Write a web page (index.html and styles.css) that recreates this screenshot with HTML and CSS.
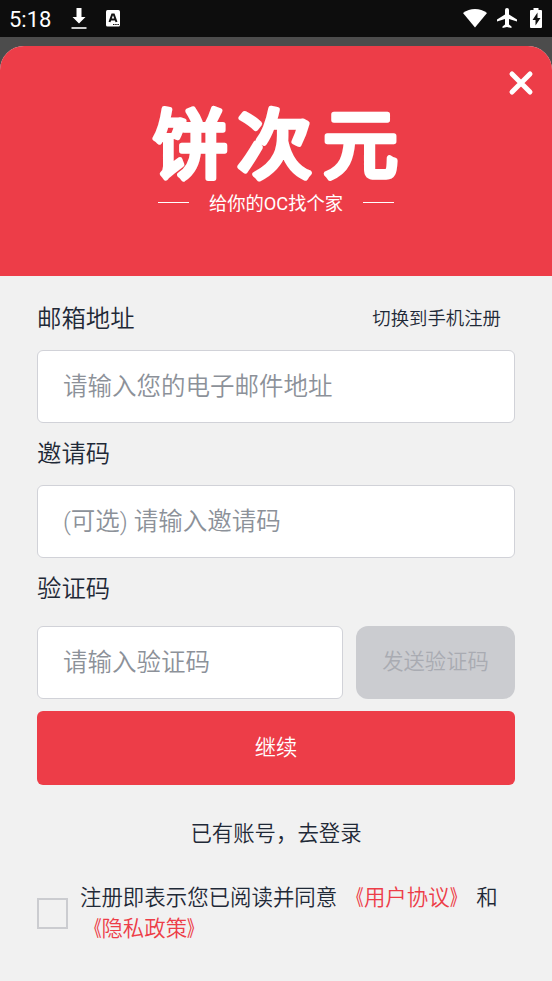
FILE: index.html
```html
<!DOCTYPE html>
<html lang="zh-CN">
<head>
<meta charset="utf-8">
<title>饼次元</title>
<link rel="stylesheet" href="styles.css">
</head>
<body>
<div class="status">
  <span class="time">5:18</span>
  <svg class="ic-download" width="16" height="22" viewBox="0 0 16 22"><path fill="#fff" d="M5.500 0h5v9h4L8 15.500 1.500 9h4z"/><path fill="#ccc" d="M.5 19h15v2H.5z"/></svg>
  <svg class="ic-app" width="14" height="17" viewBox="0 0 14 17"><rect width="14" height="16.500" rx="1.500" fill="#fff"/><path d="M3.500 12 6.200 4.500h1.600l2.700 7.500M4.700 9.500h4.600" fill="none" stroke="#111" stroke-width="2"/><path d="M7 14.500h6" stroke="#111" stroke-dasharray="1.500 .7"/></svg>
  <span class="grow"></span>
  <svg class="ic-wifi" width="24" height="19" viewBox="0 0 24 19"><path fill="#fff" d="M0 4C7-1.200 17-1.200 24 4L12 18.500z"/></svg>
  <svg class="ic-plane" width="20" height="20" viewBox="0 0 20 20"><path fill="#fff" d="M20 13.500v-2L12 6.500V2a2 2 0 0 0-4 0v4.500L0 11.500v2l8-2.500v5.500L5.500 18.500V20l4.500-1 4.500 1v-1.500L12 16.500V11z"/></svg>
  <svg class="ic-battery" width="12" height="20" viewBox="0 0 12 20"><path fill="#fff" d="M3.500 0h5v2H11q1 0 1 1v16q0 1-1 1H1q-1 0-1-1V3q0-1 1-1h2.500z"/><path fill="#111" d="M7.500 4.500 2.500 12H5.500v5.500l5-7.500H7.500z"/></svg>
</div>
<main class="sheet">
  <header class="hero">
    <svg class="close" width="26" height="26" viewBox="0 0 26 26"><path d="M4 4 22 22M22 4 4 22" stroke="#fff" stroke-width="5" stroke-linecap="round"/></svg>
    <svg class="logo" width="252" height="84" viewBox="0 0 252 84" role="img">
      <text class="wordmark" x="3" y="70">饼</text>
      <text class="wordmark" x="87" y="70">次</text>
      <text class="wordmark" x="173" y="70">元</text>
    </svg>
    <div class="tagline"><i></i><span>给你的OC找个家</span><i></i></div>
  </header>
  <form class="form">
    <div class="label-row"><label class="label">邮箱地址</label><a class="switch">切换到手机注册</a></div>
    <div class="field">请输入您的电子邮件地址</div>
    <label class="label mid">邀请码</label>
    <div class="field">(可选) 请输入邀请码</div>
    <label class="label last">验证码</label>
    <div class="code-row">
      <div class="field code">请输入验证码</div>
      <div class="send">发送验证码</div>
    </div>
    <div class="submit">继续</div>
    <a class="login">已有账号，去登录</a>
    <div class="agree">
      <span class="box"></span>
      <p>注册即表示您已阅读并同意 <a><b class="open">《</b>用户协议<b class="shut">》</b></a> 和<br><a><b class="open">《</b>隐私政策<b class="shut">》</b></a></p>
    </div>
  </form>
</main>
</body>
</html>
```
FILE: styles.css
```css
* { box-sizing: border-box; }
body {
  margin: 0;
  height: 981px;
  overflow: hidden;
  background: #4c4c4c;
  color: #1f2937;
  font-family: Roboto, "Noto Sans CJK SC", sans-serif;
  font-weight: 350;
}
svg { display: block; flex: none; }
.status {
  height: 37px;
  background: #0d0d0d;
  display: flex;
  padding: 0 9px 0 9px;
}
.time { width: 62px; font: 400 22px/39px Roboto, sans-serif; color: #fff; }
.ic-download { margin-top: 8px; }
.ic-app { margin: 10px 0 0 19px; }
.grow { flex: 1; }
.ic-wifi { margin-top: 9px; }
.ic-plane { margin: 8px 1px 0 10px; }
.ic-battery { margin: 8px 1px 0 12px; }
.sheet {
  margin-top: 9px;
  height: 935px;
  border-radius: 24px 24px 0 0;
  overflow: hidden;
  background: #f1f1f1;
}
.hero {
  height: 230px;
  background: #ed3d48;
  display: flex;
  flex-direction: column;
  align-items: center;
}
.close { align-self: flex-end; margin: 24px 18px 0 0; }
.logo { margin-top: 6px; overflow: visible; }
.wordmark {
  font-family: "Noto Sans CJK SC", sans-serif;
  font-size: 75px;
  font-weight: 400;
  fill: #fff;
  stroke: #fff;
  stroke-width: 5.500px;
  stroke-linejoin: round;
  stroke-linecap: round;
}
.tagline {
  display: flex;
  align-items: center;
  gap: 19.500px;
  margin-top: 5px;
  font-size: 18.300px;
  font-weight: 400;
  line-height: 25px;
  color: #fff;
}
.tagline i { width: 31px; height: 1px; background: #fff; position: relative; top: -1px; }
.form { padding: 24px 37px 0; }
.label-row { display: flex; justify-content: space-between; height: 49.500px; padding-right: 14px; }
.label { display: block; font-size: 24.4px; line-height: 37px; }
.switch { font-size: 18.400px; line-height: 37px; }
.mid, .last { padding-top: 12px; height: 62px; }
.last { height: 68px; }
.field {
  height: 73px;
  border: 1.500px solid #d1d2d8;
  border-radius: 6px;
  background: #fff;
  padding-left: 25px;
  font-size: 24.5px;
  line-height: 72px;
  color: #8c9199;
}
.code-row { display: flex; gap: 13px; }
.code { width: 306px; }
.send {
  flex: 1;
  height: 73px;
  border-radius: 12px;
  background: #cbccd0;
  color: #a9abb2;
  font-size: 21.3px;
  line-height: 71px;
  text-align: center;
}
.submit {
  height: 74px;
  margin-top: 12.500px;
  border-radius: 6px;
  background: #ed3d48;
  color: #fff;
  font-size: 21.3px;
  line-height: 73px;
  text-align: center;
}
.login { display: block; margin-top: 33px; font-size: 21.4px; line-height: 32px; text-align: center; }
.agree { display: flex; align-items: center; margin-top: 32px; }
.box { width: 31px; height: 31px; flex: none; border: 2px solid #cbccd0; }
.agree p { margin: 0 0 0 12px; width: 440px; font-size: 21.45px; line-height: 31px; }
.agree a { color: #ed3d48; }
.agree b { display: inline-block; font-weight: 500; }
.open { transform: scaleX(.7); transform-origin: right; }
.shut { transform: scaleX(.7); transform-origin: left; }
```
